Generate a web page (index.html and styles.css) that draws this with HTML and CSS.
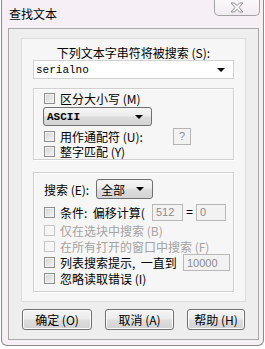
FILE: index.html
```html
<!DOCTYPE html>
<html>
<head>
<meta charset="utf-8">
<link rel="stylesheet" href="styles.css">
</head>
<body>
<div class="window">
  <div class="titlebar">
    <span class="title">查找文本</span>
    <div class="close">
      <svg width="14" height="11" viewBox="0 0 14 11"><path d="M1 1 H4.5 L7 3.6 L9.5 1 H13 L9 5.5 L13 10 H9.5 L7 7.4 L4.5 10 H1 L5 5.5 Z" fill="#fff" stroke="#8c8c8c" stroke-width="1"/></svg>
    </div>
  </div>
  <div class="client">
    <div class="area">
      <div class="label">下列文本字串符将被搜索 (S):</div>
      <div class="combo-edit"><span class="mono">serialno</span><span class="arrow"></span></div>

      <div class="group g1">
        <div class="row r1"><span class="cb"></span><span>区分大小写 (M)</span></div>
        <div class="dd dd-ascii"><span class="mono bold">ASCII</span><span class="arrow"></span></div>
        <div class="row r2"><span class="cb"></span><span class="lbl-wild">用作通配符 (U):</span><span class="help">?</span></div>
        <div class="row r3"><span class="cb"></span><span>整字匹配 (Y)</span></div>
      </div>

      <div class="group g2">
        <div class="row search"><span class="lbl-search">搜索 (E):</span><div class="dd dd-all"><span>全部</span><span class="arrow"></span></div></div>
        <div class="row cond"><span class="cb"></span><span class="lbl-cond">条件:&nbsp; 偏移计算(</span><span class="num n512">512</span><span class="eq">=</span><span class="num n0">0</span></div>
        <div class="row dis d1"><span class="cb off"></span><span>仅在选块中搜索 (B)</span></div>
        <div class="row dis d2"><span class="cb off"></span><span>在所有打开的窗口中搜索 (F)</span></div>
        <div class="row list"><span class="cb"></span><span class="lbl-list">列表搜索提示,&nbsp; 一直到</span><span class="num n10k">10000</span></div>
        <div class="row ign"><span class="cb"></span><span>忽略读取错误 (I)</span></div>
      </div>
    </div>
    <div class="buttons">
      <div class="btn b1">确定 (O)</div>
      <div class="btn b2">取消 (A)</div>
      <div class="btn b3">帮助 (H)</div>
    </div>
  </div>
</div>
</body>
</html>
```
FILE: styles.css
```css
* { box-sizing: border-box; }
html, body { margin: 0; padding: 0; background: #fff; }
body {
  font-family: "Noto Sans CJK SC", "Liberation Sans", sans-serif;
  font-size: 12px;
  color: #000;
}
.window {
  margin-left: 1px;
  width: 263px;
  height: 346px;
  background: #f6eff6;
  border-left: 1px solid #8a8a8a;
  border-right: 1px solid #8a8a8a;
  border-bottom: 1px solid #8a8a8a;
  border-radius: 0 0 6px 6px;
  display: flex;
  flex-direction: column;
}
.titlebar {
  height: 28px;
  display: flex;
  justify-content: space-between;
  align-items: flex-start;
  padding-left: 7px;
  padding-right: 3px;
}
.title { line-height: 12px; margin-top: 8px; }
.close {
  width: 46px;
  height: 16px;
  border: 1px solid #a3a3a3;
  border-top: none;
  border-radius: 0 0 5px 5px;
  background: linear-gradient(#fbf8fb, #f1ebf1);
  display: flex;
  align-items: center;
  justify-content: center;
}
.close svg { display: block; }
.client {
  margin-left: 6px;
  width: 251px;
  height: 312px;
  border: 1px solid #a8a8a8;
  background: #eeeeee;
  padding: 9px 0 0 12px;
  display: flex;
  flex-direction: column;
}
.area {
  width: 225px;
  height: 264px;
  border: 1px solid #dcdcdc;
  background: #f6f6f6;
  padding-left: 11px;
  display: flex;
  flex-direction: column;
}
.label {
  text-align: center;
  width: 201px;
  line-height: 14px;
  margin-top: 7px;
}
.mono { font-family: "Liberation Mono", "DejaVu Sans Mono", monospace; font-size: 11px; }
.bold { font-weight: bold; }
.combo-edit {
  margin-top: 0;
  width: 201px;
  height: 19px;
  background: #fff;
  border: 1px solid #d2d2d2;
  display: flex;
  align-items: center;
  justify-content: space-between;
  padding: 0 8px 0 2px;
}
.arrow {
  width: 0; height: 0;
  border-left: 4px solid transparent;
  border-right: 4px solid transparent;
  border-top: 4px solid #000;
}
.group {
  width: 201px;
  border: 1px solid #d0d0d0;
  box-shadow: inset 1px 1px 0 #fff, 1px 1px 0 #fff;
  padding-left: 10px;
  display: flex;
  flex-direction: column;
}
.g1 { margin-top: 9px; height: 72px; padding-top: 2px; }
.g2 { margin-top: 12px; height: 120px; padding-top: 6px; }
.row {
  display: flex;
  align-items: center;
  height: 15px;
  white-space: nowrap;
}
.cb {
  width: 11px;
  height: 11px;
  border: 1px solid #8e8e8e;
  background: linear-gradient(135deg, #d4d4d4, #f4f4f4);
  box-shadow: inset 0 0 0 1px #f2f2f2;
  margin-right: 5px;
  flex: none;
}
.cb.off { border-color: #c6c6c6; background: #f6f6f6; box-shadow: none; }
.dis { color: #a3a3a3; }
.dd {
  height: 20px;
  border: 1px solid #707070;
  border-radius: 3px;
  background: linear-gradient(#f6f6f6 0%, #ececec 45%, #dcdcdc 55%, #d4d4d4 100%);
  display: flex;
  align-items: center;
  justify-content: space-between;
}
.dd-ascii { width: 109px; margin-left: -1px; margin-top: 1px; padding: 0 8px 0 3px; }
.dd-all { width: 57px; padding: 0 8px 0 4px; }
.lbl-search { width: 52px; }
.lbl-wild { width: 113px; }
.lbl-cond { width: 92px; }
.lbl-list { width: 123px; }
.r2 { margin-top: 2px; height: 16px; }
.r3 { margin-top: 0; }
.help {
  width: 18px;
  height: 17px;
  border: 1px solid #b4b4b4;
  background: #f2f2f2;
  color: #8a8a8a;
  font-family: "Liberation Sans", sans-serif;
  font-size: 11px;
  display: flex;
  align-items: center;
  justify-content: center;
}
.search { height: 20px; }
.cond { margin-top: 4px; height: 18px; }
.num {
  height: 17px;
  border: 1px solid #b8b8b8;
  background: #f2f2f2;
  color: #8a8a8a;
  font-family: "Liberation Sans", sans-serif;
  font-size: 11px;
  padding-left: 3px;
  display: flex;
  align-items: center;
}
.n512 { width: 31px; }
.eq { width: 13px; text-align: center; font-family: "Liberation Sans", sans-serif; }
.n0 { width: 30px; }
.d1 { margin-top: 2px; }
.d2 { margin-top: 1px; }
.list { height: 17px; margin-top: 0; }
.n10k { width: 47px; }
.ign { margin-top: 0; }
.buttons {
  display: flex;
  margin-top: 7px;
  padding-left: 1px;
}
.btn {
  height: 21px;
  border: 1px solid #707070;
  border-radius: 3px;
  background: linear-gradient(#f4f4f4 0%, #ebebeb 45%, #dddddd 55%, #d2d2d2 100%);
  box-shadow: inset 0 0 0 1px #fcfcfc;
  display: flex;
  align-items: center;
  justify-content: center;
}
.b1 { width: 70px; }
.b2 { width: 69px; margin-left: 13px; }
.b3 { width: 58px; margin-left: 13px; }
```
